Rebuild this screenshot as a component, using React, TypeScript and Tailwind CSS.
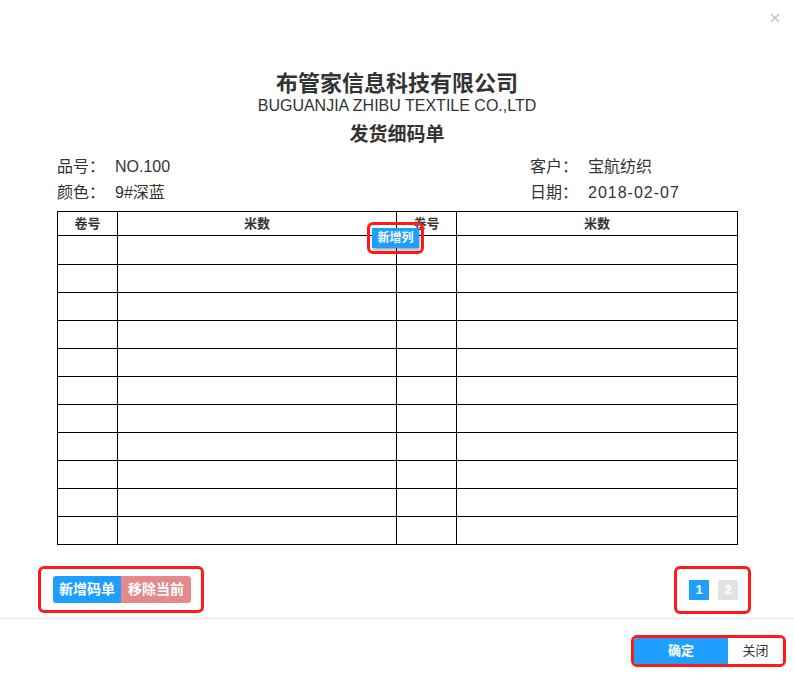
import { X } from "lucide-react";

const rows = Array.from({ length: 11 }, (_, i) => i);

export default function App() {
  return (
    <div className="relative w-[794px] h-[679px] bg-white text-[#333] font-['Liberation_Sans','Noto_Sans_CJK_SC',sans-serif] overflow-hidden">
      <button className="absolute top-[11px] right-[12px] text-[#c2c2c2]">
        <X size={14} strokeWidth={2.5} />
      </button>

      {/* title */}
      <div className="pt-[71px] flex flex-col items-center">
        <div className="text-[22px] leading-[26px] font-bold">布管家信息科技有限公司</div>
        <div className="text-[16px] leading-[18px]">BUGUANJIA ZHIBU TEXTILE CO.,LTD</div>
        <div className="mt-[8px] text-[19px] leading-[24px] font-bold">发货细码单</div>
      </div>

      {/* info */}
      <div className="px-[57px] mt-[9px] grid grid-cols-[473px_1fr] gap-y-[4px] text-[16px] leading-[22px]">
        <div className="flex">
          <span className="w-[58px]">品号：</span>
          <span>NO.100</span>
        </div>
        <div className="flex">
          <span className="w-[58px]">客户：</span>
          <span>宝航纺织</span>
        </div>
        <div className="flex">
          <span className="w-[58px]">颜色：</span>
          <span>9#深蓝</span>
        </div>
        <div className="flex">
          <span className="w-[58px]">日期：</span>
          <span className="tracking-[1px]">2018-02-07</span>
        </div>
      </div>

      {/* table */}
      <div className="relative mx-[57px] mt-[7px]">
        <table className="w-[680px] border-collapse table-fixed text-[13px]">
          <colgroup>
            <col className="w-[60px]" />
            <col className="w-[279px]" />
            <col className="w-[60px]" />
            <col className="w-[281px]" />
          </colgroup>
          <thead>
            <tr className="h-[24px]">
              <th className="border border-black font-bold">卷号</th>
              <th className="border border-black font-bold">米数</th>
              <th className="border border-black font-bold">卷号</th>
              <th className="border border-black font-bold">米数</th>
            </tr>
          </thead>
          <tbody>
            {rows.map((r) => (
              <tr key={r} className={r === 0 ? "h-[29px]" : "h-[28px]"}>
                <td className="border border-black"></td>
                <td className="border border-black"></td>
                <td className="border border-black"></td>
                <td className="border border-black"></td>
              </tr>
            ))}
          </tbody>
        </table>
        <div className="absolute left-[310px] top-[11px] w-[57px] h-[32px] border-[3px] border-[#ff1a1a] rounded-[6px] flex items-center justify-center">
          <span className="mt-[-1px] px-[5px] h-[20px] flex items-center bg-[#1e9fff] text-white text-[12px] font-bold shadow-[1px_2px_3px_rgba(0,0,0,0.35)]">
            新增列
          </span>
        </div>
      </div>

      {/* actions */}
      <div className="mt-[21px] pl-[38px] pr-[43px] flex justify-between">
        <div className="w-[166px] h-[47px] border-[3px] border-[#ff1a1a] rounded-[6px] flex items-center pl-[12px]">
          <div className="flex h-[27px] text-[14px] font-bold text-white rounded-[3px] overflow-hidden">
            <span className="w-[68px] flex items-center justify-center bg-[#1e9fff]">新增码单</span>
            <span className="w-[70px] flex items-center justify-center bg-[#e48a8a]">移除当前</span>
          </div>
        </div>
        <div className="w-[77px] h-[48px] border-[3px] border-[#ff1a1a] rounded-[6px] flex items-center pl-[12px] gap-[9px] text-[13px] font-bold text-white">
          <span className="w-[20px] h-[20px] flex items-center justify-center bg-[#1e9fff]">1</span>
          <span className="w-[20px] h-[20px] flex items-center justify-center bg-[#e2e2e2]">2</span>
        </div>
      </div>

      <div className="mt-[4px] h-px bg-[#e6e6e6]" />

      {/* footer */}
      <div className="mt-[16px] flex justify-end pr-[8px]">
        <div className="w-[155px] h-[32px] border-[3px] border-[#ff1a1a] rounded-[6px] flex overflow-hidden text-[13px]">
          <span className="w-[94px] flex items-center justify-center bg-[#1e9fff] text-white font-bold">确定</span>
          <span className="flex-1 flex items-center justify-center bg-white text-[#333]">关闭</span>
        </div>
      </div>
    </div>
  );
}
